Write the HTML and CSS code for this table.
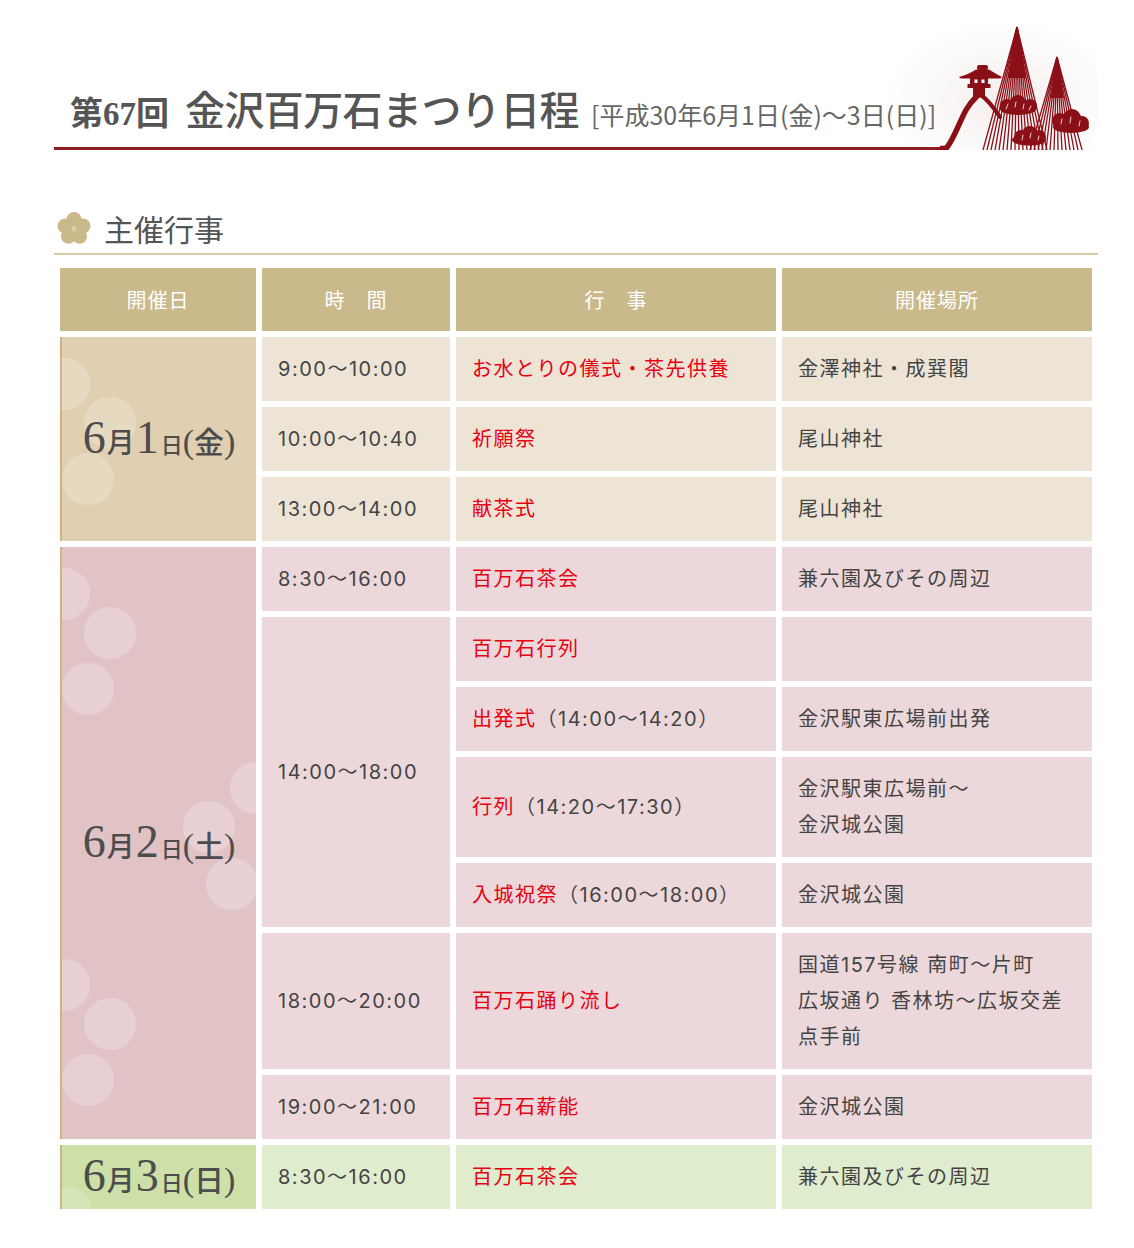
FILE: index.html
```html
<!DOCTYPE html>
<html lang="ja">
<head>
<meta charset="utf-8">
<title>第67回 金沢百万石まつり日程</title>
<link rel="stylesheet" href="styles.css">
</head>
<body>
<div class="page">
  <header class="hero">
    <div class="hero-title">
      <span class="t-num">第67回</span>
      <h1 class="t-main">金沢百万石まつり日程</h1>
      <span class="t-date">[平成30年6月1日(金)〜3日(日)]</span>
    </div>
    <svg class="hero-logo" viewBox="0 0 158 130" aria-hidden="true">
      <g fill="none" stroke="#8b0f17" stroke-linecap="round">
        <path d="M0,128.5 L6,128.5 C13,121 19,103 26,90 C30,83 34,79 37,76" stroke-width="5.5"/>
        <path d="M41,75 C48,80 54,88 60,97" stroke-width="4"/>
      </g>
      <g fill="#8b0f17">
        <rect x="37" y="45" width="11" height="5" rx="2"/>
        <path d="M19,57 Q29,54 36,49.5 L49,49.5 Q56,54 62,57 Q61,58.8 58,58.5 L23,58.5 Q20,58.8 19,57 Z"/>
        <rect x="30" y="58" width="18" height="7"/>
        <rect x="27.5" y="64" width="23" height="4"/>
        <rect x="33" y="67.5" width="12" height="10"/>
      </g>
      <g fill="#fff">
        <rect x="34.5" y="59.5" width="3" height="3.5"/>
        <rect x="41.5" y="59.5" width="3" height="3.5"/>
      </g>
      <g stroke="#8b0f17" stroke-width="1.3">
        <line x1="77" y1="7" x2="43" y2="130"/>
        <line x1="77" y1="7" x2="47" y2="130"/>
        <line x1="77" y1="7" x2="51" y2="130"/>
        <line x1="77" y1="7" x2="55" y2="130"/>
        <line x1="77" y1="7" x2="59" y2="130"/>
        <line x1="77" y1="7" x2="63" y2="130"/>
        <line x1="77" y1="7" x2="67" y2="130"/>
        <line x1="77" y1="7" x2="71" y2="130"/>
        <line x1="77" y1="7" x2="75" y2="130"/>
        <line x1="77" y1="7" x2="79" y2="130"/>
        <line x1="77" y1="7" x2="83" y2="130"/>
        <line x1="77" y1="7" x2="87" y2="130"/>
        <line x1="77" y1="7" x2="91" y2="130"/>
        <line x1="77" y1="7" x2="95" y2="130"/>
        <line x1="77" y1="7" x2="99" y2="130"/>
        <line x1="77" y1="7" x2="103" y2="130"/>
        <line x1="77" y1="7" x2="107" y2="130"/>
        <line x1="117" y1="37" x2="90" y2="130"/>
        <line x1="117" y1="37" x2="94" y2="130"/>
        <line x1="117" y1="37" x2="98" y2="130"/>
        <line x1="117" y1="37" x2="102" y2="130"/>
        <line x1="117" y1="37" x2="106" y2="130"/>
        <line x1="117" y1="37" x2="110" y2="130"/>
        <line x1="117" y1="37" x2="114" y2="130"/>
        <line x1="117" y1="37" x2="118" y2="130"/>
        <line x1="117" y1="37" x2="122" y2="130"/>
        <line x1="117" y1="37" x2="126" y2="130"/>
        <line x1="117" y1="37" x2="130" y2="130"/>
        <line x1="117" y1="37" x2="134" y2="130"/>
        <line x1="117" y1="37" x2="138" y2="130"/>
        <line x1="117" y1="37" x2="142" y2="130"/>
      </g>
      <g fill="#8b0f17">
        <polygon points="77,7 68,58 86,58"/>
        <polygon points="117,37 110,78 124,78"/>
        <circle cx="67" cy="86" r="7"/>
        <circle cx="78" cy="83" r="8"/>
        <circle cx="90" cy="86" r="7"/>
        <ellipse cx="78" cy="89" rx="18" ry="6"/>
        <circle cx="81" cy="117" r="7"/>
        <circle cx="90" cy="114" r="8"/>
        <circle cx="99" cy="117" r="7"/>
        <ellipse cx="89" cy="120" rx="17" ry="5.5"/>
        <circle cx="120" cy="101" r="8"/>
        <circle cx="132" cy="98" r="9"/>
        <circle cx="142" cy="103" r="7"/>
        <ellipse cx="131" cy="107" rx="18" ry="6"/>
      </g>
      <g stroke="#fff" stroke-width="1" stroke-linecap="round" fill="none" opacity="0.8">
        <path d="M68,84 l-2,5 M76,82 l-1,5 M84,84 l-1,5 M91,86 l-2,4"/>
        <path d="M83,115 l-1,5 M91,113 l-1,5 M99,116 l-1,4"/>
        <path d="M122,99 l-1,5 M131,97 l-1,6 M140,101 l-1,5"/>
      </g>
    </svg>
  </header>

  <h2 class="sec-title">
    <svg class="sec-icon" viewBox="0 0 34 32" aria-hidden="true">
      <g fill="#c9b98b">
        <circle cx="17" cy="7.5" r="7.5"/>
        <circle cx="26" cy="14" r="7.5"/>
        <circle cx="22.6" cy="24.3" r="7.5"/>
        <circle cx="11.4" cy="24.3" r="7.5"/>
        <circle cx="8" cy="14" r="7.5"/>
      </g>
      <circle cx="17" cy="17" r="2.5" fill="#d9cda8"/>
    </svg>
    主催行事
  </h2>

  <table class="schedule">
    <colgroup>
      <col class="c-date"><col class="c-time"><col class="c-event"><col class="c-place">
    </colgroup>
    <thead>
      <tr><th>開催日</th><th>時　間</th><th>行　事</th><th>開催場所</th></tr>
    </thead>
    <tbody>
      <tr class="day1">
        <td class="date" rowspan="3"><span class="date-label"><span class="dn">6</span><span class="dm">月</span><span class="dn">1</span><span class="dd">日</span><span class="dp">(</span><span class="dw">金</span><span class="dp">)</span></span></td>
        <td>9:00〜10:00</td>
        <td class="ev">お水とりの儀式・茶先供養</td>
        <td>金澤神社・成巽閣</td>
      </tr>
      <tr class="day1">
        <td>10:00〜10:40</td>
        <td class="ev">祈願祭</td>
        <td>尾山神社</td>
      </tr>
      <tr class="day1">
        <td>13:00〜14:00</td>
        <td class="ev">献茶式</td>
        <td>尾山神社</td>
      </tr>
      <tr class="day2">
        <td class="date" rowspan="7"><span class="date-label"><span class="dn">6</span><span class="dm">月</span><span class="dn">2</span><span class="dd">日</span><span class="dp">(</span><span class="dw">土</span><span class="dp">)</span></span></td>
        <td>8:30〜16:00</td>
        <td class="ev">百万石茶会</td>
        <td>兼六園及びその周辺</td>
      </tr>
      <tr class="day2">
        <td rowspan="4">14:00〜18:00</td>
        <td class="ev">百万石行列</td>
        <td></td>
      </tr>
      <tr class="day2">
        <td><span class="ev">出発式</span>（14:00〜14:20）</td>
        <td>金沢駅東広場前出発</td>
      </tr>
      <tr class="day2">
        <td><span class="ev">行列</span>（14:20〜17:30）</td>
        <td>金沢駅東広場前〜<br>金沢城公園</td>
      </tr>
      <tr class="day2">
        <td><span class="ev">入城祝祭</span>（16:00〜18:00）</td>
        <td>金沢城公園</td>
      </tr>
      <tr class="day2">
        <td>18:00〜20:00</td>
        <td class="ev">百万石踊り流し</td>
        <td>国道157号線 南町〜片町<br>広坂通り 香林坊〜広坂交差点手前</td>
      </tr>
      <tr class="day2">
        <td>19:00〜21:00</td>
        <td class="ev">百万石薪能</td>
        <td>金沢城公園</td>
      </tr>
      <tr class="day3">
        <td class="date"><span class="date-label"><span class="dn">6</span><span class="dm">月</span><span class="dn">3</span><span class="dd">日</span><span class="dp">(</span><span class="dw">日</span><span class="dp">)</span></span></td>
        <td>8:30〜16:00</td>
        <td class="ev">百万石茶会</td>
        <td>兼六園及びその周辺</td>
      </tr>
    </tbody>
  </table>
</div>
</body>
</html>
```

FILE: styles.css
```css
html, body {
  margin: 0;
  padding: 0;
  background: #fff;
}

body {
  font-family: "Noto Sans CJK JP", "Noto Sans", sans-serif;
  color: #444;
}

.page {
  width: 1044px;
  padding: 0 36px 40px 54px;
}

/* ---------- header ---------- */
.hero {
  display: flex;
  align-items: flex-end;
  height: 150px;
  background: radial-gradient(ellipse 120px 80px at 950px 100px, rgba(214, 190, 190, 0.26), rgba(214, 190, 190, 0) 100%);
}

.hero-title {
  flex: 1;
  display: flex;
  align-items: baseline;
  padding: 0 0 16px 16px;
  border-bottom: 3px solid #8e1c21;
  color: #555;
  white-space: nowrap;
}

.t-num {
  font-family: "Liberation Serif", "Noto Sans CJK JP", serif;
  font-size: 33px;
  font-weight: bold;
  margin-right: 16px;
  line-height: 1;
}

.t-main {
  margin: 0;
  font-size: 40px;
  font-weight: 500;
  letter-spacing: -0.6px;
  line-height: 1;
}

.t-date {
  margin-left: 12px;
  font-size: 25px;
  color: #666;
  letter-spacing: 0;
  line-height: 1;
}

.hero-logo {
  flex: none;
  display: block;
  width: 158px;
  height: 130px;
}

/* ---------- section title ---------- */
.sec-title {
  display: flex;
  align-items: center;
  gap: 13px;
  margin: 60px 0 0;
  padding: 0 0 7px 3px;
  border-bottom: 2px solid #d6caa8;
  font-size: 30px;
  font-weight: normal;
  line-height: 36px;
  color: #555;
}

.sec-icon {
  width: 34px;
  height: 32px;
  display: block;
}

/* ---------- table ---------- */
.schedule {
  width: 1044px;
  margin-top: 7px;
  border-collapse: separate;
  border-spacing: 6px;
  table-layout: fixed;
  font-family: Inter, "Noto Sans CJK JP", sans-serif;
  font-size: 20px;
  letter-spacing: 1.5px;
}

.c-date { width: 196px; }
.c-time { width: 188px; }
.c-event { width: 320px; }
.c-place { width: 310px; }

.schedule th {
  height: 63px;
  padding: 0;
  background: #c9b98b;
  color: #fff;
  font-family: "Noto Sans CJK JP", sans-serif;
  font-weight: normal;
  font-size: 20px;
  letter-spacing: 1px;
}

.schedule td {
  padding: 14px 24px 14px 16px;
  line-height: 36px;
  vertical-align: middle;
  color: #444;
}

.ev { color: #e60012; }
.schedule td.ev { color: #e60012; }

.day1 td { background: #eee4d6; }
.day2 td { background: #ecd8da; }
.day3 td { background: #e0ecce; }

.schedule td.date {
  padding: 0;
  text-align: center;
  border-left: 2px solid #c9b586;
}

.day1 td.date {
  background-color: #e0cfb0;
  background-image:
    radial-gradient(circle at 48px 86px, rgba(255,255,255,.22) 25.5px, rgba(255,255,255,0) 26.5px),
    radial-gradient(circle at 26px 142px, rgba(255,255,255,.22) 25.5px, rgba(255,255,255,0) 26.5px),
    radial-gradient(circle at 2px 47px, rgba(255,255,255,.22) 25.5px, rgba(255,255,255,0) 26.5px);
}

.day2 td.date {
  background-color: #e1c3c6;
  background-image:
    radial-gradient(circle at 48px 86px, rgba(255,255,255,.22) 25.5px, rgba(255,255,255,0) 26.5px),
    radial-gradient(circle at 26px 142px, rgba(255,255,255,.22) 25.5px, rgba(255,255,255,0) 26.5px),
    radial-gradient(circle at 2px 47px, rgba(255,255,255,.22) 25.5px, rgba(255,255,255,0) 26.5px),
    radial-gradient(circle at 147px 280px, rgba(255,255,255,.22) 25.5px, rgba(255,255,255,0) 26.5px),
    radial-gradient(circle at 170px 337px, rgba(255,255,255,.22) 25.5px, rgba(255,255,255,0) 26.5px),
    radial-gradient(circle at 194px 241px, rgba(255,255,255,.22) 25.5px, rgba(255,255,255,0) 26.5px),
    radial-gradient(circle at 48px 477px, rgba(255,255,255,.22) 25.5px, rgba(255,255,255,0) 26.5px),
    radial-gradient(circle at 26px 533px, rgba(255,255,255,.22) 25.5px, rgba(255,255,255,0) 26.5px),
    radial-gradient(circle at 2px 438px, rgba(255,255,255,.22) 25.5px, rgba(255,255,255,0) 26.5px);
}

.day3 td.date {
  background-color: #cce0a8;
  background-image:
    radial-gradient(circle at 4px 68px, rgba(255,255,255,.2) 25.5px, rgba(255,255,255,0) 26.5px),
    radial-gradient(circle at 60px 92px, rgba(255,255,255,.16) 25.5px, rgba(255,255,255,0) 26.5px);
}

.date-label {
  display: inline-flex;
  align-items: baseline;
  white-space: nowrap;
  letter-spacing: 0;
  color: #4d4d4d;
  line-height: 1;
}

.dn {
  font-family: "Liberation Serif", serif;
  font-size: 46px;
}

.dm {
  font-family: "Noto Sans CJK JP", sans-serif;
  font-size: 28px;
  font-weight: 500;
  margin: 0 1px;
}

.dd {
  font-family: "Noto Sans CJK JP", sans-serif;
  font-size: 22px;
  font-weight: 500;
  margin-left: 2px;
}

.dp {
  font-family: "Liberation Serif", serif;
  font-size: 34px;
}

.dw {
  font-family: "Noto Sans CJK JP", sans-serif;
  font-size: 30px;
  font-weight: 500;
}
```
